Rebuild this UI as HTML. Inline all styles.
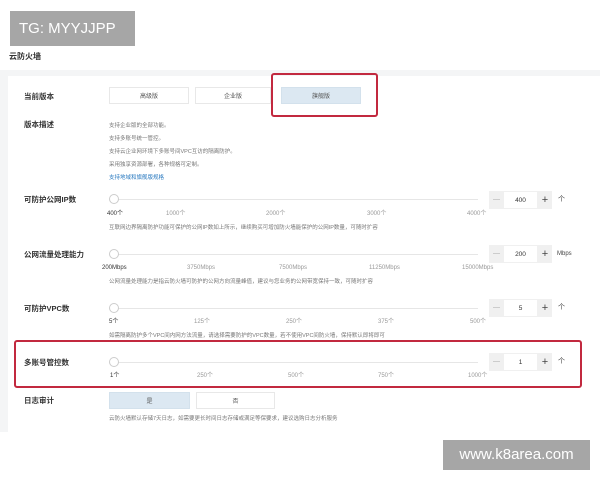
<!DOCTYPE html>
<html><head><meta charset="utf-8"><style>
*{margin:0;padding:0;box-sizing:border-box}
body{width:600px;height:480px;background:#fff;position:relative;overflow:hidden;font-family:"Liberation Sans","Noto Sans CJK SC",sans-serif;color:#333}
.a{position:absolute;white-space:nowrap;line-height:1}
.lab{font-size:7.5px;font-weight:bold;color:#333}
.sm{font-size:5.5px;color:#777}
.tk{font-size:6px;color:#999}
.btn{position:absolute;height:17px;border:1px solid #e8e8e8;background:#fff;font-size:6px;color:#555;display:flex;align-items:center;justify-content:center}
.btn.on{background:#dce8f2;border-color:#d3e1ec}
.track{position:absolute;left:114px;width:364px;height:1px;background:#e6e6e6}
.knob{position:absolute;width:10px;height:10px;border:1px solid #ccc;border-radius:50%;background:#fff}
.inp{position:absolute;left:489px;width:63px;height:18px;background:#f0f0f0}
.inp .v{position:absolute;left:15px;top:1px;width:33px;height:16px;background:#fff;font-size:6.5px;display:flex;align-items:center;justify-content:center;color:#333}
.inp .m{position:absolute;left:4px;top:8px;width:7px;height:1px;background:#ccc}
.inp .p{position:absolute;left:51px;top:0;height:18px;width:10px;font-size:11px;color:#444;display:flex;align-items:center;justify-content:center}
.red{position:absolute;border:2px solid #c2293f;border-radius:3px}
</style></head><body>
<div class="a" style="left:10px;top:11px;width:125px;height:35px;background:#a6a6a6;color:#fff;font-size:15px;line-height:35px;padding-left:9px">TG: MYYJJPP</div>
<div class="a lab" style="left:9px;top:53px;font-size:8px">云防火墙</div>
<div class="a" style="left:0;top:70px;width:600px;height:362px;background:#f4f5f6"></div>
<div class="a" style="left:8px;top:76px;width:592px;height:356px;background:#fff"></div>

<div class="a lab" style="left:24px;top:93px">当前版本</div>
<div class="btn" style="left:109px;top:87px;width:80px">高级版</div>
<div class="btn" style="left:195px;top:87px;width:76px">企业版</div>
<div class="btn on" style="left:281px;top:87px;width:80px">旗舰版</div>
<div class="red" style="left:271px;top:73px;width:107px;height:44px"></div>

<div class="a lab" style="left:24px;top:121px">版本描述</div>
<div class="a sm" style="left:109px;top:120px;line-height:13px">支持企业版的全部功能。<br>支持多账号统一管控。<br>支持云企业网环境下多账号间VPC互访的隔离防护。<br>采用独享资源部署，各种规格可定制。<br><span style="color:#2a7ac0">支持地域和旗舰版规格</span></div>

<div class="a lab" style="left:24px;top:196px">可防护公网IP数</div>
<div class="track" style="top:199px"></div><div class="knob" style="left:109px;top:194px"></div>
<div class="a tk" style="left:107px;top:211px;color:#333">400个</div>
<div class="a tk" style="left:166px;top:211px">1000个</div>
<div class="a tk" style="left:266px;top:211px">2000个</div>
<div class="a tk" style="left:367px;top:211px">3000个</div>
<div class="a tk" style="left:467px;top:211px">4000个</div>
<div class="inp" style="top:191px"><span class="m"></span><div class="v">400</div><span class="p">+</span></div>
<div class="a tk" style="left:558px;top:196px;color:#444;font-size:7px">个</div>
<div class="a sm" style="left:109px;top:226px">互联网边界隔离防护功能可保护的公网IP数如上所示，继续购买可增加防火墙能保护的公网IP数量，可随时扩容</div>

<div class="a lab" style="left:24px;top:251px">公网流量处理能力</div>
<div class="track" style="top:254px"></div><div class="knob" style="left:109px;top:249px"></div>
<div class="a tk" style="left:102px;top:265px;color:#333">200Mbps</div>
<div class="a tk" style="left:187px;top:265px">3750Mbps</div>
<div class="a tk" style="left:279px;top:265px">7500Mbps</div>
<div class="a tk" style="left:369px;top:265px">11250Mbps</div>
<div class="a tk" style="left:462px;top:265px">15000Mbps</div>
<div class="inp" style="top:245px"><span class="m"></span><div class="v">200</div><span class="p">+</span></div>
<div class="a tk" style="left:557px;top:251px;color:#444">Mbps</div>
<div class="a sm" style="left:109px;top:280px">公网流量处理能力是指云防火墙可防护的公网方向流量峰值，建议与您业务的公网带宽保持一致，可随时扩容</div>

<div class="a lab" style="left:24px;top:305px">可防护VPC数</div>
<div class="track" style="top:308px"></div><div class="knob" style="left:109px;top:303px"></div>
<div class="a tk" style="left:109px;top:319px;color:#333">5个</div>
<div class="a tk" style="left:194px;top:319px">125个</div>
<div class="a tk" style="left:286px;top:319px">250个</div>
<div class="a tk" style="left:378px;top:319px">375个</div>
<div class="a tk" style="left:470px;top:319px">500个</div>
<div class="inp" style="top:299px"><span class="m"></span><div class="v">5</div><span class="p">+</span></div>
<div class="a tk" style="left:558px;top:304px;color:#444;font-size:7px">个</div>
<div class="a sm" style="left:109px;top:334px">如需隔离防护多个VPC间内网方法流量，请选择需要防护的VPC数量，若不使用VPC间防火墙，保持默认即将即可</div>

<div class="a lab" style="left:24px;top:359px">多账号管控数</div>
<div class="track" style="top:362px"></div><div class="knob" style="left:109px;top:357px"></div>
<div class="a tk" style="left:110px;top:373px;color:#333">1个</div>
<div class="a tk" style="left:197px;top:373px">250个</div>
<div class="a tk" style="left:288px;top:373px">500个</div>
<div class="a tk" style="left:378px;top:373px">750个</div>
<div class="a tk" style="left:468px;top:373px">1000个</div>
<div class="inp" style="top:353px"><span class="m"></span><div class="v">1</div><span class="p">+</span></div>
<div class="a tk" style="left:558px;top:358px;color:#444;font-size:7px">个</div>
<div class="red" style="left:14px;top:340px;width:568px;height:48px"></div>

<div class="a lab" style="left:24px;top:397px">日志审计</div>
<div class="btn on" style="left:109px;top:392px;width:81px">是</div>
<div class="btn" style="left:196px;top:392px;width:79px">否</div>
<div class="a sm" style="left:109px;top:417px">云防火墙默认存储7天日志，如需要更长时间日志存储或满足等保要求，建议选购日志分析服务</div>

<div class="a" style="left:443px;top:440px;width:147px;height:30px;background:#a6a6a6;color:#fff;font-size:15px;line-height:30px;text-align:center">www.k8area.com</div>
</body></html>
